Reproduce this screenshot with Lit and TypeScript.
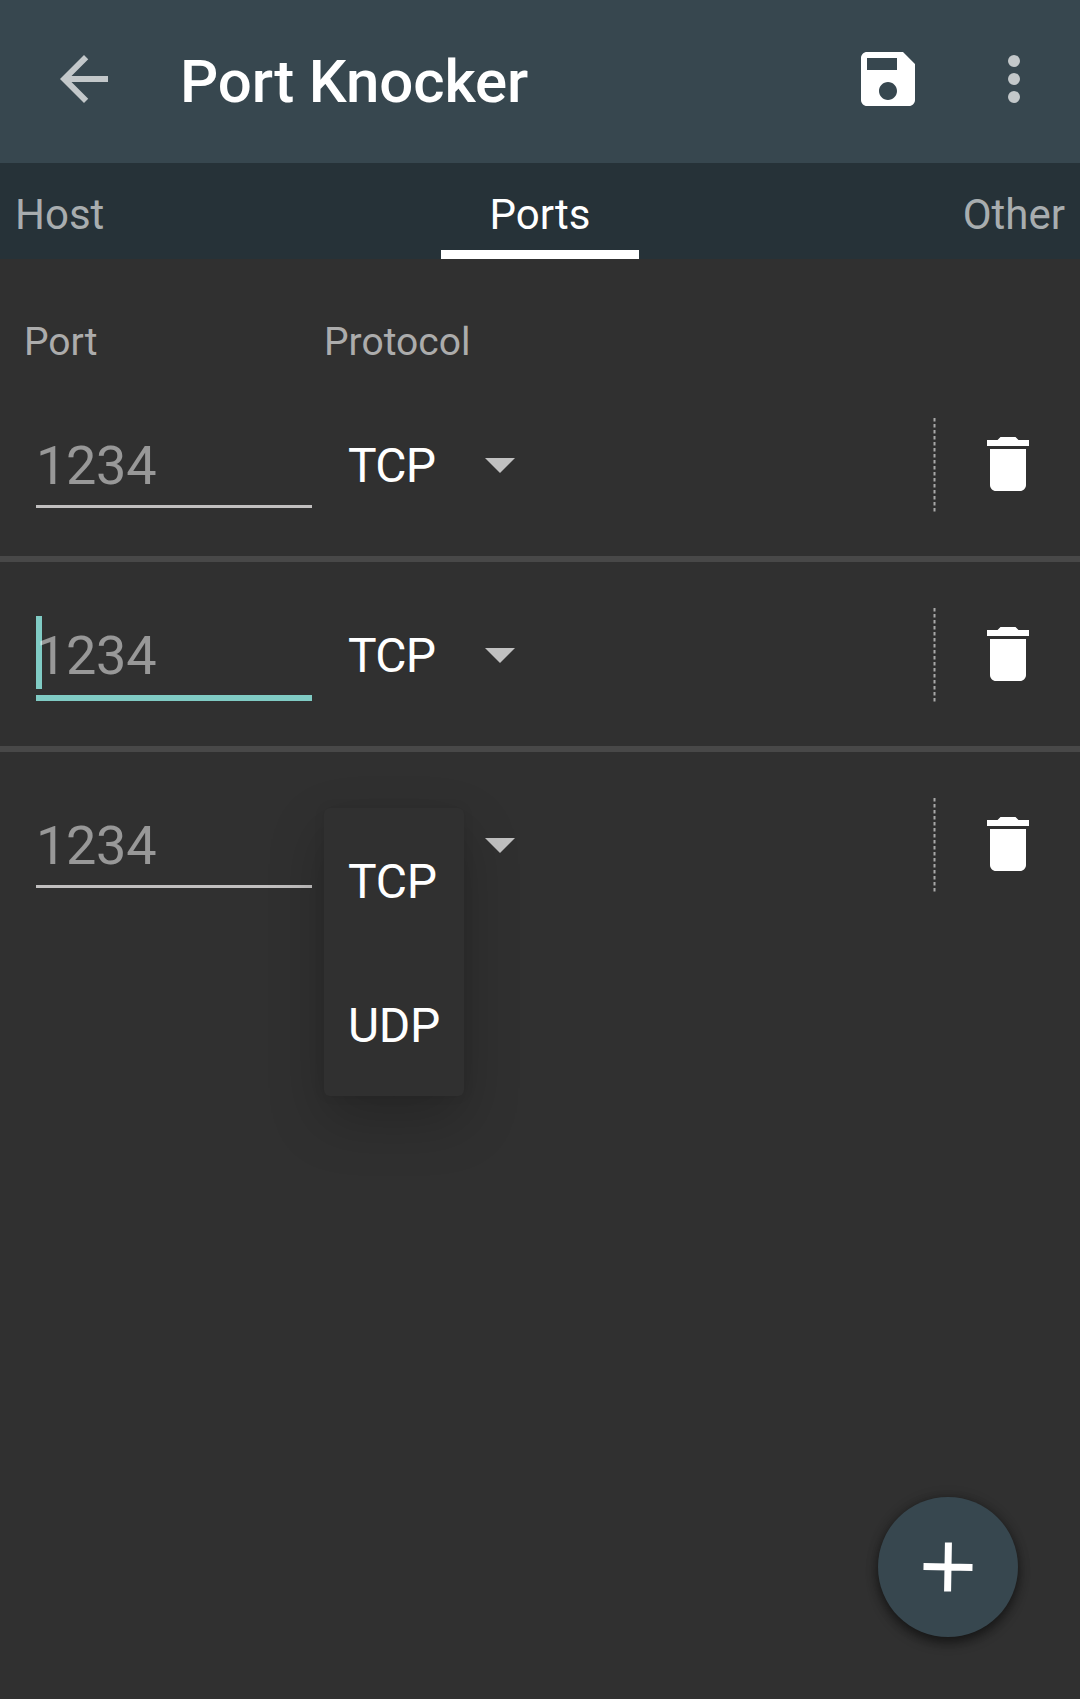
import { LitElement, html, css, svg, nothing } from "lit";
import { customElement, property, state } from "lit/decorators.js";

const ICONS = {
  back: svg`<path d="M20 11H7.83l5.59-5.59L12 4l-8 8 8 8 1.41-1.41L7.83 13H20v-2z"/>`,
  save: svg`<path fill-rule="evenodd" d="M17 3H5c-1.11 0-2 .9-2 2v14c0 1.1.89 2 2 2h14c1.1 0 2-.9 2-2V7l-4-4zM12 19c-1.66 0-3-1.34-3-3s1.34-3 3-3 3 1.34 3 3-1.34 3-3 3zM15 9H5V5h10v4z"/>`,
  more: svg`<circle cx="12" cy="6" r="2"/><circle cx="12" cy="12" r="2"/><circle cx="12" cy="18" r="2"/>`,
  trash: svg`<path d="M6 19c0 1.1.9 2 2 2h8c1.1 0 2-.9 2-2V7H6v12zM19 4h-3.5l-1-1h-5l-1 1H5v2h14V4z"/>`,
};

@customElement("md-icon")
class MdIcon extends LitElement {
  @property() name: keyof typeof ICONS = "back";
  static styles = css`
    :host { display: block; width: 72px; height: 72px; flex: none; }
    svg { display: block; width: 72px; height: 72px; fill: currentColor; }
  `;
  render() {
    return html`<svg viewBox="0 0 24 24">${ICONS[this.name]}</svg>`;
  }
}

@customElement("port-row")
class PortRow extends LitElement {
  @property({ type: Boolean }) focused = false;
  @property({ type: Boolean }) open = false;
  @property() protocol = "TCP";
  static styles = css`
    :host { display: block; }
    .row { display: flex; align-items: center; height: 184px; padding: 0 36px; box-sizing: border-box; }
    .field { width: 276px; height: 98px; margin-top: 38px; box-sizing: border-box; border-bottom: 3px solid #c1bfbf; position: relative; align-self: flex-start; }
    .hint { display: block; font-size: 54px; line-height: 64px; padding-top: 24px; letter-spacing: -0.3px; color: rgba(255, 255, 255, 0.5); position: relative; }
    .focused .field { border-bottom: 6px solid #80cbc4; height: 101px; }
    .caret { position: absolute; left: 0; top: 16px; width: 6px; height: 73px; background: #80cbc4; }
    .spinner { position: relative; display: flex; align-items: center; margin-left: 12px; width: 200px; height: 144px; }
    .value { font-size: 48px; line-height: 56px; padding: 4px 0 0 24px; width: 137px; letter-spacing: -0.7px; }
    .arrow { width: 30px; height: 15px; fill: #c1c1c1; display: block; margin-top: 3px; }
    .dots { width: 3px; height: 95px; margin-left: 409px; display: block; }
    md-icon { margin-left: 36px; color: #fff; }
    .menu { position: absolute; left: 0; top: 36px; width: 140px; border-radius: 6px; background: #303030;
      box-shadow: 0 24px 56px rgba(0, 0, 0, 0.22), 0 0 12px rgba(0, 0, 0, 0.07); z-index: 2; }
    .item { height: 144px; box-sizing: border-box; padding: 4px 0 0 24px; line-height: 140px; font-size: 48px; letter-spacing: -0.3px; }
  `;
  render() {
    return html`<div class="row ${this.focused ? "focused" : ""}">
      <div class="field">
        ${this.focused ? html`<span class="caret"></span>` : nothing}
        <span class="hint">1234</span>
      </div>
      <div class="spinner">
        <span class="value">${this.open ? nothing : this.protocol}</span>
        <svg class="arrow" viewBox="0 0 30 15"><path d="M0 0h30L15 15z"/></svg>
        ${this.open
          ? html`<div class="menu"><div class="item">TCP</div><div class="item">UDP</div></div>`
          : nothing}
      </div>
      <svg class="dots" viewBox="0 0 3 95">
        <path d="M1.5 1V95" fill="none" stroke="#a8a8a8" stroke-width="2" stroke-dasharray="3.4 2.6"/>
      </svg>
      <md-icon name="trash"></md-icon>
    </div>`;
  }
}

@customElement("app-root")
class AppRoot extends LitElement {
  @state() rows = [
    { focused: false, open: false },
    { focused: true, open: false },
    { focused: false, open: true },
  ];
  static styles = css`
    :host { display: block; font-family: Roboto, "Liberation Sans", sans-serif; color: #fff; }
    .screen { position: relative; display: flex; flex-direction: column; height: 1699px; background: #303030; overflow: hidden; }
    header { display: flex; align-items: center; height: 163px; padding: 0 30px 5px 48px; box-sizing: border-box; background: #37474f; }
    .dim { color: #c3c8ca; }
    h1 { flex: 1; margin: 5px 0 0 60px; font-size: 60px; line-height: 70px; font-weight: 500; letter-spacing: -0.15px; }
    .more { margin-left: 54px; }
    nav { display: grid; grid-template-columns: 1fr 198px 1fr; height: 96px; background: #263238; font-size: 42px; line-height: 50px; }
    .tab { padding: 27px 15px 0; color: #a8adaf; }
    .end { text-align: right; }
    .active { padding: 27px 0 0; text-align: center; color: #fff; border-bottom: 9px solid #fff; }
    .labels { display: flex; height: 113px; padding: 0 24px; box-sizing: border-box; font-size: 39px; line-height: 46px; color: #acacac; }
    .labels span { padding-top: 60px; width: 300px; }
    .list port-row + port-row { border-top: 6px solid #484848; }
    .fab { position: absolute; left: 878px; top: 1497px; width: 140px; height: 140px; border-radius: 50%; background: #37474f;
      box-shadow: 0 6px 12px rgba(0, 0, 0, 0.45), 0 0 12px rgba(0, 0, 0, 0.25); }
    .fab svg { display: block; width: 140px; height: 140px; }
  `;
  render() {
    return html`<div class="screen">
      <header>
        <md-icon class="dim" name="back"></md-icon>
        <h1>Port Knocker</h1>
        <md-icon name="save"></md-icon>
        <md-icon class="dim more" name="more"></md-icon>
      </header>
      <nav>
        <div class="tab">Host</div>
        <div class="active">Ports</div>
        <div class="tab end">Other</div>
      </nav>
      <div class="labels"><span>Port</span><span>Protocol</span></div>
      <div class="list">
        ${this.rows.map((r) => html`<port-row ?focused=${r.focused} ?open=${r.open}></port-row>`)}
      </div>
      <div class="fab">
        <svg viewBox="0 0 140 140">
          <path d="M70 45.5v49M45.5 70h49" transform="rotate(1 70 70)" stroke="#fff" stroke-width="7"/>
        </svg>
      </div>
    </div>`;
  }
}
